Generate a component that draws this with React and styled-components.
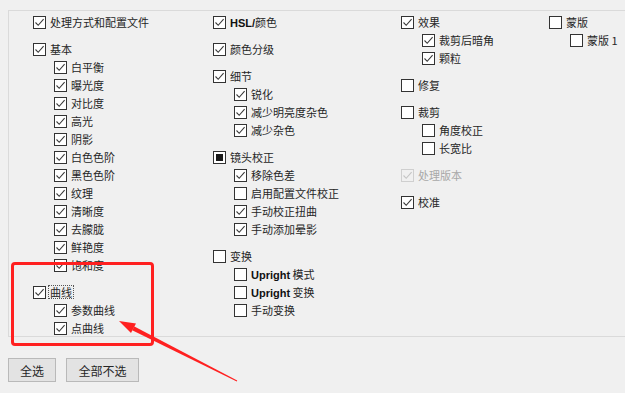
import React from "react"
import styled, { createGlobalStyle } from "styled-components"

const GlobalStyle = createGlobalStyle`
  body {
    margin: 0;
    background: #f0f0f0;
    overflow: hidden;
    font-family: "Noto Sans CJK SC", "Noto Sans", sans-serif;
  }
`

const Page = styled.div`
  position: relative;
  width: 625px;
  height: 393px;
  padding-top: 10px;
  box-sizing: border-box;
`

const Panel = styled.div`
  margin-left: 8px;
  height: 327px;
  box-sizing: border-box;
  border: 1px solid #dadada;
  border-right: none;
  padding: 2px 0 0 24px;
  display: grid;
  grid-template-columns: 180px 188px 148px 1fr;
  align-items: start;
`

const Column = styled.div`
  display: flex;
  flex-direction: column;
  gap: 9px;
`

const Group = styled.div`
  display: flex;
  flex-direction: column;
`

const Row = styled.div`
  height: 18px;
  display: flex;
  align-items: center;
  gap: 4px;
  padding-left: ${p => (p.$child ? "21px" : "0")};
  font-size: 11px;
  color: ${p => (p.$disabled ? "#a8a8a8" : "#262626")};
  white-space: nowrap;
`

const Box = styled.span`
  width: 13px;
  height: 13px;
  box-sizing: border-box;
  border: 1px solid ${p => (p.$disabled ? "#cfcfcf" : "#333")};
  background: ${p => (p.$disabled ? "transparent" : "#fff")};
  display: flex;
  align-items: center;
  justify-content: center;
  flex: none;
`

const Mixed = styled.span`
  width: 7px;
  height: 7px;
  background: #1a1a1a;
`

const Label = styled.span`
  line-height: 12px;
  padding: 0 1px;
  border: 1px dotted ${p => (p.$focus ? "#555" : "transparent")};
  margin-left: -2px;
`

const Latin = styled.span`
  font-family: "Liberation Sans", "Open Sans", sans-serif;
  font-weight: 700;
  color: #111;
`

const ButtonBar = styled.div`
  display: flex;
  gap: 10px;
  margin: 21px 0 0 8px;
`

const Button = styled.button`
  height: 24px;
  min-width: ${p => p.$w}px;
  padding: 0 8px;
  border: 1px solid #b9b9b9;
  background: #e3e3e3;
  font-family: "Noto Sans CJK SC", sans-serif;
  font-size: 12px;
  color: #262626;
  border-radius: 0;
`

const Highlight = styled.div`
  position: absolute;
  left: 11px;
  top: 262px;
  width: 143px;
  height: 84px;
  box-sizing: border-box;
  border: 3px solid #ff2020;
  border-radius: 4px;
  pointer-events: none;
`

const Arrow = styled.svg`
  position: absolute;
  left: 0;
  top: 0;
  pointer-events: none;
`

function Check({ state, disabled }) {
  return (
    <Box $disabled={disabled}>
      {state === "on" && (
        <svg width="11" height="11" viewBox="0 0 11 11">
          <path d="M1.5 5.5 L4.2 8.3 L9.6 2.2" fill="none" stroke={disabled ? "#c4c4c4" : "#3a3a3a"} strokeWidth="1.1" />
        </svg>
      )}
      {state === "mixed" && <Mixed />}
    </Box>
  )
}

function Item({ text, state = "off", child, disabled, focus }) {
  return (
    <Row $child={child} $disabled={disabled}>
      <Check state={state} disabled={disabled} />
      <Label $focus={focus}>{text}</Label>
    </Row>
  )
}

const basic = ["白平衡", "曝光度", "对比度", "高光", "阴影", "白色色阶", "黑色色阶", "纹理", "清晰度", "去朦胧", "鲜艳度", "饱和度"]

export default function App() {
  return (
    <Page>
      <GlobalStyle />
      <Panel>
        <Column>
          <Group><Item text="处理方式和配置文件" state="on" /></Group>
          <Group>
            <Item text="基本" state="on" />
            {basic.map(t => <Item key={t} text={t} state="on" child />)}
          </Group>
          <Group>
            <Item text="曲线" state="on" focus />
            <Item text="参数曲线" state="on" child />
            <Item text="点曲线" state="on" child />
          </Group>
        </Column>
        <Column>
          <Group><Item text={<><Latin>HSL/</Latin>颜色</>} state="on" /></Group>
          <Group><Item text="颜色分级" state="on" /></Group>
          <Group>
            <Item text="细节" state="on" />
            <Item text="锐化" state="on" child />
            <Item text="减少明亮度杂色" state="on" child />
            <Item text="减少杂色" state="on" child />
          </Group>
          <Group>
            <Item text="镜头校正" state="mixed" />
            <Item text="移除色差" state="on" child />
            <Item text="启用配置文件校正" child />
            <Item text="手动校正扭曲" state="on" child />
            <Item text="手动添加晕影" state="on" child />
          </Group>
          <Group>
            <Item text="变换" />
            <Item text={<><Latin>Upright</Latin> 模式</>} child />
            <Item text={<><Latin>Upright</Latin> 变换</>} child />
            <Item text="手动变换" child />
          </Group>
        </Column>
        <Column>
          <Group>
            <Item text="效果" state="on" />
            <Item text="裁剪后暗角" state="on" child />
            <Item text="颗粒" state="on" child />
          </Group>
          <Group><Item text="修复" /></Group>
          <Group>
            <Item text="裁剪" />
            <Item text="角度校正" child />
            <Item text="长宽比" child />
          </Group>
          <Group><Item text="处理版本" state="on" disabled /></Group>
          <Group><Item text="校准" state="on" /></Group>
        </Column>
        <Column>
          <Group>
            <Item text="蒙版" />
            <Item text="蒙版 1" child />
          </Group>
        </Column>
      </Panel>
      <ButtonBar>
        <Button $w={48}>全选</Button>
        <Button $w={73}>全部不选</Button>
      </ButtonBar>
      <Highlight />
      <Arrow width="625" height="393" viewBox="0 0 625 393">
        <polygon points="134.4,326.4 132.2,330.2 236.8,381.4 237.2,380.6" fill="#ff2020" />
        <polygon points="119,321 136,323.5 131,333" fill="#ff2020" />
      </Arrow>
    </Page>
  )
}
